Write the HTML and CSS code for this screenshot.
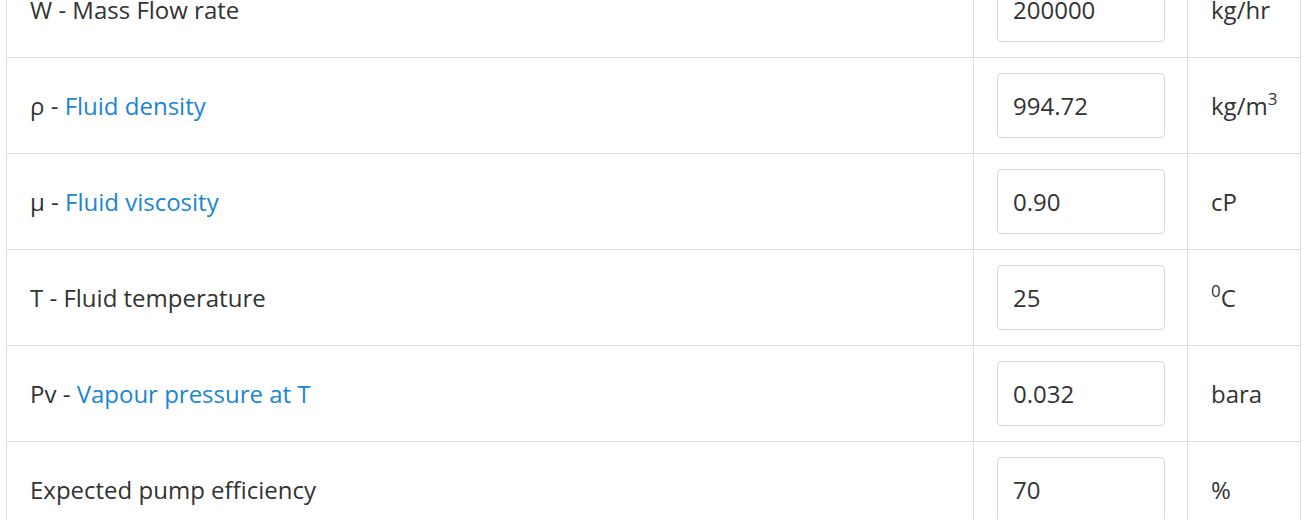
FILE: index.html
```html
<!DOCTYPE html>
<html lang="en">
<head>
<meta charset="utf-8">
<title>Pump inputs</title>
<link rel="stylesheet" href="styles.css">
</head>
<body>
<div class="grid">
  <div class="cell label"><span>W - Mass Flow rate</span></div>
  <div class="cell field"><input class="inp" type="text" value="200000"></div>
  <div class="cell unit"><span>kg/hr</span></div>

  <div class="cell label"><span>ρ - <a class="link" href="#">Fluid density</a></span></div>
  <div class="cell field"><input class="inp" type="text" value="994.72"></div>
  <div class="cell unit"><span>kg/m<sup class="sup">3</sup></span></div>

  <div class="cell label"><span>μ - <a class="link" href="#">Fluid viscosity</a></span></div>
  <div class="cell field"><input class="inp" type="text" value="0.90"></div>
  <div class="cell unit"><span>cP</span></div>

  <div class="cell label"><span>T - Fluid temperature</span></div>
  <div class="cell field"><input class="inp" type="text" value="25"></div>
  <div class="cell unit"><span><sup class="sup">0</sup>C</span></div>

  <div class="cell label"><span>Pv - <a class="link" href="#">Vapour pressure at T</a></span></div>
  <div class="cell field"><input class="inp" type="text" value="0.032"></div>
  <div class="cell unit"><span>bara</span></div>

  <div class="cell label"><span>Expected pump efficiency</span></div>
  <div class="cell field"><input class="inp" type="text" value="70"></div>
  <div class="cell unit"><span>%</span></div>
</div>
</body>
</html>
```
FILE: styles.css
```css
html, body {
  margin: 0;
  padding: 0;
  background: #fff;
}
body {
  font-family: "Open Sans", "Liberation Sans", sans-serif;
  font-size: 24px;
  color: #333;
  overflow: hidden;
}
.grid {
  display: grid;
  grid-template-columns: 967px 214px 114px;
  grid-auto-rows: 96px;
  margin: -39px 0 0 6px;
  width: 1295px;
  border-top: 1px solid #ddd;
}
.cell {
  box-sizing: border-box;
  border-left: 1px solid #ddd;
  border-bottom: 1px solid #ddd;
  display: flex;
  align-items: center;
}
.label {
  padding: 0 23px;
}
.field {
  padding: 0 22px 0 23px;
}
.unit {
  padding: 0 22px 0 23px;
  border-right: 1px solid #ddd;
}
.link {
  color: #1a86d2;
  text-decoration: none;
}
.inp {
  box-sizing: border-box;
  width: 168px;
  height: 65px;
  margin: 0;
  padding: 0 15px;
  border: 1px solid #d9d9d9;
  border-radius: 4px;
  font-family: "Open Sans", "Liberation Sans", sans-serif;
  font-size: 24px;
  color: #333;
  background: #fff;
  outline: none;
}
.sup {
  font-size: 17px;
  line-height: 0;
  vertical-align: 10px;
}
```
